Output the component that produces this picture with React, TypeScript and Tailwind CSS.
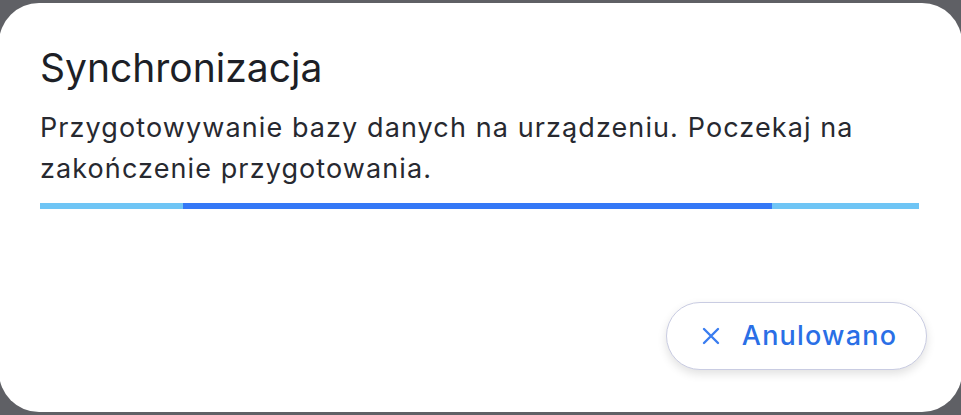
import React from "react";

export default function App() {
  return (
    <div className="w-[961px] h-[415px] bg-[#5f6065] pt-[3px] pb-[3px] overflow-hidden" style={{ fontFamily: "Inter, 'Noto Sans', sans-serif" }}>
      <div className="h-full bg-white rounded-[40px] flex flex-col px-[41px] pt-[41px] pb-[42px] -mx-[1px]">
        <h1 className="text-[39px] leading-[48px] text-[#1d1f26] font-normal">Synchronizacja</h1>
        <p className="mt-[15px] text-[27px] leading-[41px] text-[#272930] tracking-[1.1px]">
          Przygotowywanie bazy danych na urządzeniu. Poczekaj na zakończenie przygotowania.
        </p>
        <div className="mt-[14px] h-[6px] w-[879px] bg-[#6fc5f5] flex">
          <div className="ml-[143px] w-[589px] h-full bg-[#3478f6]" />
        </div>
        <div className="flex-1" />
        <div className="flex justify-end -mr-[6px]">
          <button className="h-[68px] w-[261px] pl-[6px] rounded-full border border-[#c9cce2] bg-white shadow-[0_4px_10px_rgba(0,0,0,0.12)] flex items-center justify-center gap-[22px] text-[#2a6fe6]">
            <svg width="18" height="18" viewBox="0 0 18 18" fill="none" stroke="#3a7df0" strokeWidth="2.4" strokeLinecap="round">
              <path d="M2 2L16 16M16 2L2 16" />
            </svg>
            <span className="text-[27px] font-medium tracking-[1.2px]">Anulowano</span>
          </button>
        </div>
      </div>
    </div>
  );
}
